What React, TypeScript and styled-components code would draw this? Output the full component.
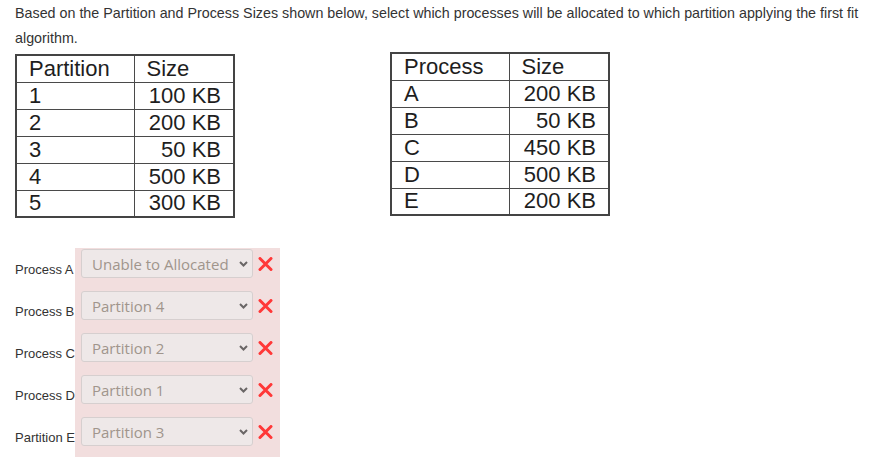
import React from "react";
import styled, { createGlobalStyle } from "styled-components";

const Global = createGlobalStyle`
  html, body { margin: 0; padding: 0; background: #fff; }
  body { font-family: "Liberation Sans", Arial, sans-serif; }
`;

const Page = styled.div`
  padding: 1px 15px 8px 15px;
  width: 879px;
  box-sizing: border-box;
`;

const Question = styled.p`
  margin: 0;
  font-size: 14.3px;
  line-height: 25px;
  color: #333;
`;

const Tables = styled.div`
  display: flex;
  align-items: flex-start;
  gap: 155px;
  margin-top: 1px;
`;

const DataTable = styled.table<{ $top: number }>`
  border-collapse: collapse;
  margin-top: ${(p) => p.$top}px;
  font-family: "Liberation Sans", Arial, sans-serif;
  font-size: 22px;
  color: #1e1e1e;
  border: 2px solid #444;
`;

const Row = styled.tr`
  height: 27px;
`;

const Cell = styled.td<{ $right?: boolean; $w: number }>`
  border: 1.5px solid #4a4a4a;
  padding: 0 ${(p) => (p.$right ? 12 : 10)}px 0 ${(p) => (p.$right ? 10 : 12)}px;
  width: ${(p) => p.$w}px;
  box-sizing: border-box;
  text-align: ${(p) => (p.$right ? "right" : "left")};
  line-height: 24px;
  white-space: nowrap;
`;

const Answers = styled.div`
  display: grid;
  grid-template-columns: 60px 205px;
  margin-top: 30px;
`;

const Label = styled.div`
  font-size: 13px;
  line-height: 15px;
  color: #333;
  padding-top: 14px;
  height: 42px;
  box-sizing: border-box;
  white-space: nowrap;
`;

const AnswerCell = styled.div<{ $last?: boolean }>`
  background: #f2dede;
  height: ${(p) => (p.$last ? 41 : 42)}px;
  box-sizing: border-box;
  padding: 1px 0 0 6px;
  display: flex;
  align-items: flex-start;
  gap: 5px;
`;

const Select = styled.div`
  width: 172px;
  height: 29px;
  box-sizing: border-box;
  border: 1px solid #d6cfcf;
  border-radius: 3px;
  background: #eee8e8;
  display: flex;
  align-items: center;
  justify-content: space-between;
  padding: 0 4px 0 10px;
  font-family: "Open Sans", sans-serif;
  font-size: 15px;
  color: #a0958c;
  white-space: nowrap;
`;

const Chevron = () => (
  <svg width="9" height="6" viewBox="0 0 9 6">
    <path d="M1 1 L4.5 4.5 L8 1" fill="none" stroke="#6a6666" strokeWidth="2" />
  </svg>
);

const Cross = styled.svg`
  margin-top: 8px;
  flex: none;
`;

const WrongMark = () => (
  <Cross width="15" height="14" viewBox="0 0 15 14">
    <path d="M2 1.5 L13 12.5 M13 1.5 L2 12.5" stroke="#ff3838" strokeWidth="3" strokeLinecap="round" fill="none" />
  </Cross>
);

const partitions = [
  ["1", "100 KB"],
  ["2", "200 KB"],
  ["3", "50 KB"],
  ["4", "500 KB"],
  ["5", "300 KB"],
];
const processes = [
  ["A", "200 KB"],
  ["B", "50 KB"],
  ["C", "450 KB"],
  ["D", "500 KB"],
  ["E", "200 KB"],
];
const answers = [
  ["Process A", "Unable to Allocated"],
  ["Process B", "Partition 4"],
  ["Process C", "Partition 2"],
  ["Process D", "Partition 1"],
  ["Partition E", "Partition 3"],
];

const SizeTable = ({ head, rows, top }: { head: string; rows: string[][]; top: number }) => (
  <DataTable $top={top}>
    <tbody>
      <Row>
        <Cell $w={118}>{head}</Cell>
        <Cell $w={100}>Size</Cell>
      </Row>
      {rows.map(([a, b]) => (
        <Row key={a}>
          <Cell $w={118}>{a}</Cell>
          <Cell $w={100} $right>
            {b}
          </Cell>
        </Row>
      ))}
    </tbody>
  </DataTable>
);

export default function App() {
  return (
    <Page>
      <Global />
      <Question>
        Based on the Partition and Process Sizes shown below, select which processes will be allocated to which partition applying the first fit algorithm.
      </Question>
      <Tables>
        <SizeTable head="Partition" rows={partitions} top={2} />
        <SizeTable head="Process" rows={processes} top={0} />
      </Tables>
      <Answers>
        {answers.map(([label, value], i) => (
          <React.Fragment key={label}>
            <Label>{label}</Label>
            <AnswerCell $last={i === answers.length - 1}>
              <Select>
                <span>{value}</span>
                <Chevron />
              </Select>
              <WrongMark />
            </AnswerCell>
          </React.Fragment>
        ))}
      </Answers>
    </Page>
  );
}
